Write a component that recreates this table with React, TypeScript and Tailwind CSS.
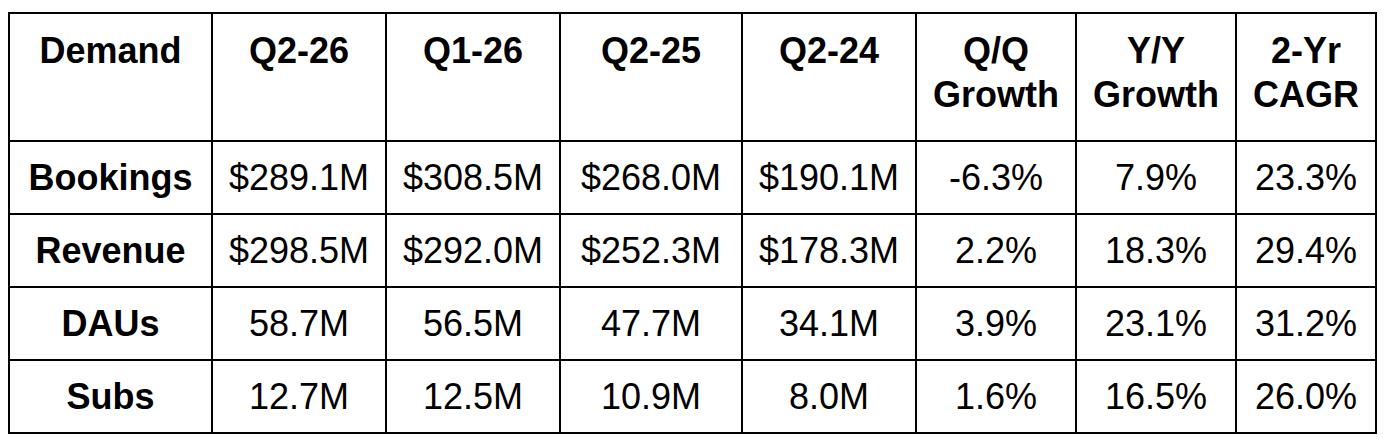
import React from 'react';

const headers = ['Demand', 'Q2-26', 'Q1-26', 'Q2-25', 'Q2-24', 'Q/Q\nGrowth', 'Y/Y\nGrowth', '2-Yr\nCAGR'];

const rows = [
  ['Bookings', '$289.1M', '$308.5M', '$268.0M', '$190.1M', '-6.3%', '7.9%', '23.3%'],
  ['Revenue', '$298.5M', '$292.0M', '$252.3M', '$178.3M', '2.2%', '18.3%', '29.4%'],
  ['DAUs', '58.7M', '56.5M', '47.7M', '34.1M', '3.9%', '23.1%', '31.2%'],
  ['Subs', '12.7M', '12.5M', '10.9M', '8.0M', '1.6%', '16.5%', '26.0%'],
];

const widths = ['w-[203px]', 'w-[174px]', 'w-[174px]', 'w-[182px]', 'w-[174px]', 'w-[160px]', 'w-[160px]', 'w-[140px]'];

const App: React.FC = () => {
  return (
    <div className="min-h-screen bg-white pl-2 pt-3 text-black" style={{ fontFamily: '"Liberation Sans", Arial, sans-serif' }}>
      <table className="w-[1367px] table-fixed border-collapse text-[36px] leading-[44px]">
        <colgroup>
          {widths.map((w, i) => (
            <col key={i} className={w} />
          ))}
        </colgroup>
        <thead>
          <tr className="h-[128px]">
            {headers.map(h => (
              <th key={h} className="border-2 border-black px-0 pt-[15px] text-center align-top font-bold whitespace-pre-line">
                {h}
              </th>
            ))}
          </tr>
        </thead>
        <tbody>
          {rows.map(row => (
            <tr key={row[0]} className="h-[73px]">
              {row.map((cell, i) => (
                <td
                  key={i}
                  className={`border-2 border-black p-0 text-center align-middle ${i === 0 ? 'font-bold' : 'font-normal'}`}
                >
                  {cell}
                </td>
              ))}
            </tr>
          ))}
        </tbody>
      </table>
    </div>
  );
};

export default App;
